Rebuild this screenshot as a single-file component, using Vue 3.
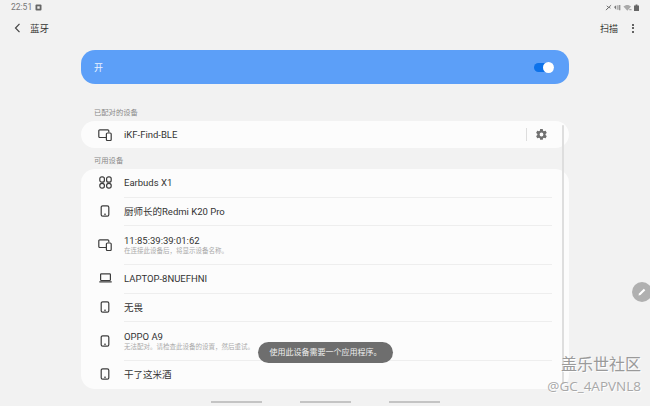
<template>
  <div class="screen">
    <div class="status-bar">
      <div class="status-left">
        <span>22:51</span>
        <svg width="7" height="7" viewBox="0 0 7 7"><rect x="0.5" y="0.5" width="6" height="6" rx="1" fill="#666" /><rect x="2.3" y="2.3" width="2.4" height="2.4" fill="#eee" /></svg>
      </div>
      <div class="status-right">
        <svg width="7" height="7" viewBox="0 0 8 7"><path d="M1 6.5 7 .8M2 1.5l2 2-2 2M4.5 2.5l1.500 2" stroke="#666" stroke-width="1" fill="none" /></svg>
        <svg width="7" height="7" viewBox="0 0 8 7"><path d="M0 3l2.500-2v5zM4 1h1v5H4zM6 .5h1.200v6H6z" fill="#777" /></svg>
        <svg width="9" height="7" viewBox="0 0 10 7"><path d="M.5 2.500C3 0 6.500 0 9 2.500L4.800 7z" fill="#aaa" /><path d="M7 5.500h2.500v1H7z" fill="#888" /></svg>
        <svg width="5" height="7" viewBox="0 0 5 7"><path d="M1.600.6h1.800v1H5V7H0V1.600h1.600z" fill="#666" /></svg>
      </div>
    </div>

    <header class="app-bar">
      <div class="bar-left">
        <svg width="7" height="10" viewBox="0 0 7 10"><path d="M5.500 .8 1.500 5l4 4.200" fill="none" stroke="#444" stroke-width="1.200" /></svg>
        <span class="title">蓝牙</span>
      </div>
      <div class="bar-right">
        <span class="scan">扫描</span>
        <span class="more"><i></i><i></i><i></i></span>
      </div>
    </header>

    <main class="content">
      <div class="master">
        <span>开</span>
        <span class="switch"><i></i></span>
      </div>

      <p class="section first">已配对的设备</p>
      <div class="card paired">
        <div class="row-icon" v-html="icons.multi"></div>
        <span class="name">iKF-Find-BLE</span>
        <span class="sep"></span>
        <svg class="gear" width="13" height="13" viewBox="0 0 24 24"><path fill="#707070" d="M19.400 13c.1-.3.1-.7.1-1s0-.7-.1-1l2.100-1.600c.2-.2.2-.4.1-.6l-2-3.500c-.1-.2-.4-.3-.6-.2l-2.500 1c-.5-.4-1.100-.7-1.700-1L14.400 2.400c0-.2-.2-.4-.5-.4h-4c-.2 0-.5.200-.5.400L9 5.100c-.6.300-1.200.600-1.700 1l-2.500-1c-.2-.1-.5 0-.6.200l-2 3.500c-.1.200-.1.500.1.600L4.400 11c0 .3-.1.700-.1 1s0 .7.1 1l-2.100 1.600c-.2.2-.2.4-.1.600l2 3.500c.1.200.4.300.6.200l2.500-1c.5.400 1.100.700 1.700 1l.4 2.600c0 .2.300.4.500.4h4c.3 0 .5-.2.500-.4l.4-2.600c.6-.3 1.200-.6 1.700-1l2.500 1c.2.100.5 0 .6-.2l2-3.500c.1-.2.1-.5-.1-.6zM12 15.500a3.500 3.500 0 1 1 0-7 3.500 3.500 0 0 1 0 7z" /></svg>
      </div>

      <p class="section">可用设备</p>
      <div class="card list">
        <div v-for="device in devices" :key="device.name" class="device" :class="{ tall: device.sub }">
          <div class="row-icon" v-html="icons[device.icon]"></div>
          <div class="device-text">
            <span class="name">{{ device.name }}</span>
            <span v-if="device.sub" class="sub">{{ device.sub }}</span>
          </div>
        </div>
      </div>
    </main>

    <div class="scrollbar"></div>
    <div class="toast">使用此设备需要一个应用程序。</div>
    <div class="pen">
      <svg width="10" height="10" viewBox="0 0 10 10"><path d="M1.500 8.500 2 6.500 6.800 1.700 8.300 3.200 3.500 8z" fill="#fff" /></svg>
    </div>
    <div class="watermark">
      <span class="wm-title">盖乐世社区</span>
      <span class="wm-user">@GC_4APVNL8</span>
    </div>

    <nav class="nav-bar">
      <i></i><i></i><i></i>
    </nav>
  </div>
</template>

<script setup>
const phone = '<svg width="12" height="12" viewBox="0 0 12 12"><rect x="2.200" y="0.800" width="7.600" height="10.400" rx="1.500" fill="none" stroke="#3c3c3c" stroke-width="1.200"/><path d="M5 9.200h2" stroke="#3c3c3c" stroke-width="1"/></svg>'
const multi = '<svg width="14" height="12" viewBox="0 0 14 12"><path d="M8 8.500H1.800a1 1 0 0 1-1-1V1.800a1 1 0 0 1 1-1h8a1 1 0 0 1 1 1v1.700" fill="none" stroke="#3c3c3c" stroke-width="1.200"/><rect x="8.400" y="4" width="4.800" height="7.500" rx="1" fill="#fff" stroke="#3c3c3c" stroke-width="1.200"/></svg>'
const buds = '<svg width="13" height="13" viewBox="0 0 13 13"><g fill="none" stroke="#3c3c3c" stroke-width="1.200"><rect x="0.800" y="0.800" width="4.600" height="5.400" rx="2"/><rect x="7.600" y="0.800" width="4.600" height="5.400" rx="2"/><rect x="0.800" y="7.400" width="4.600" height="4.800" rx="2.200"/><rect x="7.600" y="7.400" width="4.600" height="4.800" rx="2.200"/></g></svg>'
const laptop = '<svg width="13" height="10" viewBox="0 0 13 10"><rect x="1.600" y="0.800" width="9.800" height="6.700" rx=".8" fill="none" stroke="#3c3c3c" stroke-width="1.200"/><path d="M.3 8.900h12.400" stroke="#3c3c3c" stroke-width="1.300"/></svg>'

const icons = { phone, multi, buds, laptop }

const devices = [
  { name: 'Earbuds X1', icon: 'buds' },
  { name: '厨师长的Redmi K20 Pro', icon: 'phone' },
  { name: '11:85:39:39:01:62', sub: '在连接此设备后，将显示设备名称。', icon: 'multi' },
  { name: 'LAPTOP-8NUEFHNI', icon: 'laptop' },
  { name: '无畏', icon: 'phone' },
  { name: 'OPPO A9', sub: '无法配对。请检查此设备的设置，然后重试。', icon: 'phone' },
  { name: '干了这米酒', icon: 'phone' }
]
</script>

<style>
html,
body {
  margin: 0;
  background: #f2f2f2;
}
</style>

<style scoped>
.screen {
  position: relative;
  width: 650px;
  height: 406px;
  overflow: hidden;
  background: #f2f2f2;
  color: #333;
  font-family: Roboto, "Noto Sans CJK SC", sans-serif;
  font-size: 9px;
}

.status-bar {
  display: flex;
  justify-content: space-between;
  align-items: center;
  height: 14px;
  padding: 0 11px;
  color: #777;
  font-size: 8.5px;
}

.status-left,
.status-right {
  display: flex;
  align-items: center;
  gap: 3px;
}

.status-right {
  gap: 2px;
}

.app-bar {
  display: flex;
  justify-content: space-between;
  align-items: center;
  height: 28px;
  padding: 0 16px 0 14px;
}

.bar-left {
  display: flex;
  align-items: center;
  gap: 9px;
}

.title {
  font-size: 9.5px;
}

.bar-right {
  display: flex;
  align-items: center;
  gap: 14px;
}

.scan {
  font-size: 9px;
}

.more {
  display: flex;
  flex-direction: column;
  gap: 1.5px;
}

.more i {
  width: 2px;
  height: 2px;
  border-radius: 50%;
  background: #333;
}

.content {
  width: 488px;
  margin: 8px 0 0 81px;
}

.master {
  display: flex;
  justify-content: space-between;
  align-items: center;
  height: 34px;
  padding: 0 15px 0 13px;
  border-radius: 14px;
  background: #5c9ff8;
  color: #eaf3ff;
  font-size: 9px;
}

.switch {
  position: relative;
  width: 20px;
  height: 9px;
  border-radius: 5px;
  background: #0d72ea;
}

.switch i {
  position: absolute;
  top: -1px;
  right: 0;
  width: 11px;
  height: 11px;
  border-radius: 50%;
  background: #fff;
}

.section {
  margin: 0;
  padding: 6px 0 0 13px;
  height: 13px;
  line-height: 13px;
  color: #888;
  font-size: 7.3px;
}

.section.first {
  padding-top: 21px;
  height: 16px;
  line-height: 15px;
}

.card {
  background: #fcfcfc;
  border-radius: 14px;
}

.paired {
  display: flex;
  align-items: center;
  height: 27px;
  padding-right: 21px;
}

.row-icon {
  display: flex;
  justify-content: center;
  align-items: center;
  flex: none;
  width: 43px;
  padding-left: 5px;
  box-sizing: border-box;
}

.name {
  flex: 1;
  font-size: 9.5px;
  line-height: 11px;
  color: #333;
}

.sep {
  width: 1px;
  height: 13px;
  margin-right: 8px;
  background: #ddd;
}

.list {
  margin-top: 2px;
  height: 219.5px;
  overflow: hidden;
}

.device {
  display: flex;
  align-items: center;
  height: 28.7px;
}

.device:first-child {
  height: 27.7px;
}

.device.tall {
  height: 38.7px;
}

.device + .device .device-text {
  border-top: 1px solid #eeeeee;
}

.device-text {
  display: flex;
  flex-direction: column;
  justify-content: center;
  align-self: stretch;
  flex: 1;
  margin-right: 17px;
}

.device-text .name {
  flex: none;
}

.sub {
  margin-top: 1px;
  color: #aaa;
  font-size: 6.5px;
  line-height: 9px;
}

.scrollbar {
  position: absolute;
  left: 562px;
  top: 125px;
  width: 2px;
  height: 260px;
  border-radius: 1px;
  background: #dedede;
}

.toast {
  position: absolute;
  left: 258px;
  top: 342px;
  width: 135px;
  height: 21px;
  border-radius: 11px;
  background: #6e6e6e;
  color: #eee;
  font-size: 8px;
  line-height: 21px;
  text-align: center;
}

.pen {
  position: absolute;
  left: 632px;
  top: 282px;
  display: flex;
  justify-content: center;
  align-items: center;
  width: 20px;
  height: 20px;
  border-radius: 50%;
  background: #b0b0b0;
}

.watermark {
  position: absolute;
  right: 9px;
  top: 356px;
  display: flex;
  flex-direction: column;
  align-items: flex-end;
  color: #a8a8a8;
}

.wm-title {
  font-size: 16px;
  line-height: 18px;
  color: #9a9a9a;
  text-shadow: 1px 1px 0 #fff;
}

.wm-user {
  font-family: "Open Sans", sans-serif;
  font-size: 13.5px;
  line-height: 24px;
  text-shadow: 1px 1px 0 #fff;
}

.nav-bar {
  position: absolute;
  left: 0;
  right: 0;
  bottom: 3px;
  display: flex;
  justify-content: center;
  gap: 38px;
}

.nav-bar i {
  width: 51px;
  height: 2px;
  background: #c4c4c4;
}
</style>
